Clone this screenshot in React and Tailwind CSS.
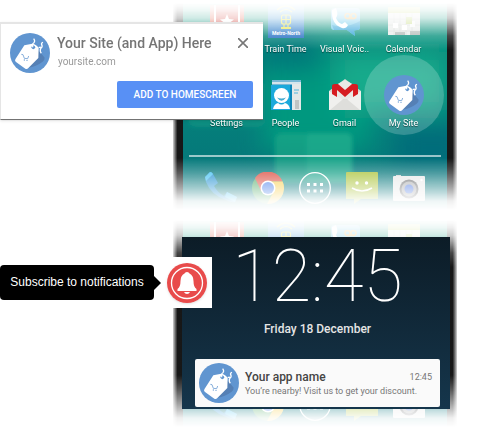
import React from "react";

function TagIcon({ className = "size-10" }) {
  return (
    <svg viewBox="0 0 120 120" className={`${className} shrink-0`} aria-hidden="true">
      <circle cx="60" cy="60" r="60" fill="#6095d0" />
      <path d="M86 52 L104 74 Q104 82 98 86 Q78 101 55 104 Z" fill="#5580b5" />
      <path d="M43 37 L67 32 Q80 34 86 45 L85 75 L55 105 Q51 110 46 107 L17 86 Q13 82 17 77Z" fill="#fff" />
      <circle cx="70" cy="43" r="5.500" fill="#6095d0" />
      <path d="M69 43 Q64 34 71 30 Q77 25 71 17" fill="none" stroke="#fff" strokeWidth="3.500" />
      <path d="M86 44 Q96 39 91 50 Q90 57 94 61 M91 47 Q99 43 95 35 Q93 30 99 28" fill="none" stroke="#fff" strokeWidth="4" />
      <path d="M34 64 L39 65 L43 76 L53 77 L56 69" fill="none" stroke="#6f9fd4" strokeWidth="2.500" />
      <circle cx="43" cy="81" r="2" fill="#6f9fd4" />
      <circle cx="51" cy="82" r="2" fill="#6f9fd4" />
    </svg>
  );
}

function StarIcon() {
  return (
    <svg viewBox="0 0 36 32" className="h-8 w-9" aria-hidden="true">
      <rect x="1" width="34" height="32" fill="#fff" />
      <path d="M1 0H5V32H1Z M31 0H35V32H31Z" fill="#e0563f" />
      <rect x="7" width="22" height="32" fill="#d23b32" />
      <path d="m18 9 2 5 5 .5-4 3 1.500 5-4.500-3-4.500 3 1.500-5-4-3 5-.5z" fill="#fff" />
    </svg>
  );
}

function TrainIcon({ caption }) {
  return (
    <svg viewBox="0 0 36 34" className="h-[34px] w-9" aria-hidden="true">
      <defs>
        <linearGradient id="train" x2="0" y2="1">
          <stop stopColor="#4fb0e0" />
          <stop offset="1" stopColor="#2a70c4" />
        </linearGradient>
      </defs>
      <rect width="36" height="34" fill="url(#train)" />
      <g fill="none" stroke="#e8e337" strokeWidth="1.200">
        <path d="M9 6Q18-2 27 6M12 8Q18 3 24 8" />
        <rect x="13.500" y="11" width="9" height="9" rx="2" />
        <path d="M14 15.500H22M18 11V20M16 20V24M20 20V24" />
      </g>
      <path d="M13 23H23V25H13Z" fill="#e8e337" />
      {caption && (
        <text x="18" y="31" textAnchor="middle" fontSize="5" fontWeight="700" fill="#fff" fontFamily="Roboto, sans-serif">{caption}</text>
      )}
    </svg>
  );
}

function VoicemailIcon() {
  return (
    <svg viewBox="0 0 32 32" className="size-8" aria-hidden="true">
      <path d="M5 3H28Q31 3 31 6V22Q31 25 28 25H25L26 31L18 25H5Q2 25 2 22V6Q2 3 5 3Z" fill="#5cc3e8" />
      <path d="M3 20Q17 24 31 16V22Q31 25 28 25L25 26 26 31 18 25H5Z" fill="#2da3d8" />
      <path d="M3 5 7 3Q9 8 8 11L7 13Q9 18 13 19L16 17 19 20Q17 24 13 23Q2 19 3 5Z" fill="#fff" />
      <g fill="none" stroke="#f2b24a" strokeWidth="1.500">
        <circle cx="18.500" cy="11" r="2.500" />
        <circle cx="24.500" cy="11" r="2.500" />
        <path d="M18 13.500H25" />
      </g>
    </svg>
  );
}

function CalendarIcon() {
  return (
    <svg viewBox="0 0 32 32" className="size-8" aria-hidden="true">
      <rect y="2" width="32" height="28" fill="#e9ecea" />
      <rect y="2" width="32" height="6" fill="#c0d35a" />
      <path d="M0 14H32M0 20H32M0 26H32M6 8V30M12 8V30M18 8V30M24 8V30" stroke="#d3d9d6" strokeWidth=".8" />
      <rect x="5" y="18" width="5" height="5" fill="#fff" />
      <rect x="14" y="20" width="5" height="5" fill="#fff" />
      <rect x="22" y="16" width="5" height="6" fill="#f8faf8" />
      <rect x="18" y="12" width="6" height="7" fill="#c8dc86" />
      <path d="M7 27H17V30H7Z M22 26H32V30H22Z" fill="#b3bab7" />
    </svg>
  );
}

function GearIcon() {
  return (
    <svg viewBox="0 0 32 32" className="size-8" aria-hidden="true">
      <circle cx="16" cy="16" r="10" fill="none" stroke="#c9d0d2" strokeWidth="5" />
    </svg>
  );
}

function PeopleIcon() {
  return (
    <svg viewBox="0 0 32 32" className="size-8" aria-hidden="true">
      <path d="M2 1H31V6H2Z" fill="#77b8d5" />
      <path d="M2 3H31V5H2Z" fill="#d4e5ec" />
      <path d="M22 5H31V31H22Z" fill="#e4e8e8" />
      <path d="M24 11H29M24 14H28" stroke="#55b6dc" />
      <path d="M25 21H29V30H25Z" fill="#c1c4c4" />
      <rect x="1" y="6" width="21" height="25" fill="#1ba9db" />
      <path d="M20 6H22V31H20Z" fill="#0d88b9" />
      <circle cx="11.500" cy="16.500" r="7.500" fill="#fff" />
      <path d="M7 18.500Q11.500 25 16 18.500Q11.500 20.500 7 18.500Z" fill="#48acd0" />
      <path d="M3 30Q4 25 8 24Q11.500 27 15 24Q19 25 20 30Z" fill="#fff" />
    </svg>
  );
}

function GmailIcon() {
  return (
    <svg viewBox="0 0 32 32" className="size-8" aria-hidden="true">
      <path d="M0 12 16 0 32 12V31H0Z" fill="#d8d8d5" />
      <path d="M5 7 16 1 27 7V20H5Z" fill="#e9e9e6" />
      <path d="M0 12 16 22 32 12V31H0Z" fill="#f0f0ee" />
      <path d="M1 31 13 21Q16 19 19 21L31 31Z" fill="#dededb" />
      <path d="M3 7Q3 5 6 5H9L16 11 23 5H26Q29 5 29 7V15L24 18V11L16 18 8 11V18L3 15Z" fill="#d61d22" />
    </svg>
  );
}

function PhoneIcon() {
  return (
    <svg viewBox="0 0 32 32" className="size-8" aria-hidden="true">
      <path d="M0 5 5 0Q7 0 8 2L13 11 9 14Q13 21 19 24L22 20 32 25 30 30Q27 31 21 28Q6 23 1 10Z" fill="#1f8fd0" />
      <path d="M0 5 5 0Q7 0 8 2L5 5 1 9Z M22 20 32 25 30 30 20 25Z" fill="#3fc0f2" />
    </svg>
  );
}

function ChromeIcon() {
  return (
    <svg viewBox="0 0 32 32" className="size-8" aria-hidden="true">
      <circle cx="16" cy="16" r="16" fill="#4ba862" />
      <path d="M3 6A16 16 0 0 1 30.600 9.500H16L9 19Z" fill="#dc4a3d" />
      <path d="M16 9.500H30.600A16 16 0 0 1 15 32L22 19Z" fill="#f8cc42" />
      <circle cx="16" cy="16" r="7.500" fill="#fff" />
      <circle cx="16" cy="16" r="6" fill="#4179e8" />
    </svg>
  );
}

function DrawerIcon() {
  return (
    <svg viewBox="0 0 32 32" className="size-8" aria-hidden="true">
      <circle cx="16" cy="16" r="15.300" fill="#ffffff18" stroke="#fff" strokeWidth="1.300" />
      <path d="M8 11h3v3H8zM14.500 11h3v3h-3zM21 11h3v3h-3zM8 17.500h3v3H8zM14.500 17.500h3v3h-3zM21 17.500h3v3h-3z" fill="#fff" />
    </svg>
  );
}

function MessageIcon() {
  return (
    <svg viewBox="0 0 32 32" className="size-8" aria-hidden="true">
      <path d="M1 0H31Q32 0 32 1V27H15L8 32V27H0V1Q0 0 1 0Z" fill="#a9c237" />
      <circle cx="11" cy="11" r="1.700" fill="#fff" />
      <circle cx="20.500" cy="11" r="1.700" fill="#fff" />
      <path d="M6 16Q16 22 26 16" fill="none" stroke="#fff" strokeWidth="1.600" />
    </svg>
  );
}

function CameraIcon() {
  return (
    <svg viewBox="0 0 32 32" className="size-8" aria-hidden="true">
      <path d="M3 3H8V6H3Z" fill="#d0d3d3" />
      <rect y="4" width="32" height="25" rx="1" fill="#e7e8e8" />
      <circle cx="16" cy="17" r="9.500" fill="#6b6d6f" />
      <circle cx="16" cy="17" r="7.500" fill="#a9abad" />
      <circle cx="16" cy="17" r="4.500" fill="#4a77e0" />
      <circle cx="28.500" cy="8" r="1.200" fill="#fff" />
    </svg>
  );
}

function Wallpaper({ id }) {
  return (
    <svg className="absolute inset-0 size-full" viewBox="0 0 265 217" preserveAspectRatio="none" aria-hidden="true">
      <defs>
        <linearGradient id={`${id}-base`} x2="0" y2="1">
          <stop stopColor="#1aa184" />
          <stop offset=".28" stopColor="#05887c" />
          <stop offset=".7" stopColor="#057a7a" />
          <stop offset="1" stopColor="#0b7681" />
        </linearGradient>
        <filter id={`${id}-soft`}><feGaussianBlur stdDeviation="12" /></filter>
        <filter id={`${id}-edge`}><feGaussianBlur stdDeviation="2" /></filter>
      </defs>
      <rect width="265" height="217" fill={`url(#${id}-base)`} />
      <g filter={`url(#${id}-soft)`}>
        <rect x="80" y="60" width="110" height="90" fill="#06987f" />
        <rect x="155" y="52" width="110" height="58" fill="#16aa8b" />
        <rect x="215" y="128" width="70" height="40" fill="#046c7a" />
        <rect x="75" y="35" width="60" height="35" fill="#02777a" />
      </g>
      <g filter={`url(#${id}-edge)`}>
        <rect x="5" y="80" width="78" height="47" rx="7" fill="#099282" opacity=".8" />
        <rect x="92" y="133" width="78" height="50" rx="7" fill="#1aa789" opacity=".65" />
        <rect x="124" y="133" width="46" height="50" rx="5" fill="#2db593" opacity=".4" />
      </g>
    </svg>
  );
}

function HomeApp({ icon, label, highlighted }) {
  return (
    <li className="flex h-[50px] flex-col items-center gap-1.5">
      <span className="relative flex h-8 w-9 shrink-0 items-center justify-center">
        {highlighted && <span className="absolute -inset-x-[22px] -inset-y-6 rounded-full bg-white/20" />}
        <span className="relative flex shrink-0">{icon}</span>
      </span>
      {label && (
        <span className="relative whitespace-nowrap text-[9px] leading-3 text-white [text-shadow:0_1px_1px_#0008]">{label}</span>
      )}
    </li>
  );
}

function Phone({ id, locked }) {
  return (
    <div className="ml-[173px] mr-6 flex h-[217px] [mask-image:linear-gradient(transparent_3px,#0001_10px,#0003_18px,#0007_26px,#000c_36px,#000_50px,#000_158px,#000b_172px,#0006_187px,#0001_201px,transparent_210px)]">
      <div className="w-2.5 shrink-0 bg-linear-to-r from-neutral-300 via-neutral-900 via-45% to-neutral-900" />
      <div className="relative min-w-0 flex-1 overflow-hidden px-1.5 pt-[5px]">
        <Wallpaper id={id} />
        <ul className="relative grid grid-cols-4 gap-y-6 px-2">
          <HomeApp icon={<StarIcon />} />
          <HomeApp icon={<TrainIcon caption={!locked && "Metro-North"} />} label={!locked && "Train Time"} />
          <HomeApp icon={<VoicemailIcon />} label={!locked && "Visual Voic.."} />
          <HomeApp icon={<CalendarIcon />} label={!locked && "Calendar"} />
          <HomeApp icon={<GearIcon />} label={!locked && "Settings"} />
          <HomeApp icon={<PeopleIcon />} label={!locked && "People"} />
          <HomeApp icon={<GmailIcon />} label={!locked && "Gmail"} />
          <HomeApp icon={<TagIcon />} label={!locked && "My Site"} highlighted={!locked} />
        </ul>
        <hr className="relative mt-[26px] border-t-2 border-white/60" />
        <div className="relative mt-[15px] grid grid-cols-5 justify-items-center px-2">
          <PhoneIcon />
          <ChromeIcon />
          <DrawerIcon />
          <MessageIcon />
          <CameraIcon />
        </div>
      </div>
      <div className="w-2.5 shrink-0 bg-linear-to-l from-neutral-300 via-neutral-900 via-45% to-neutral-900" />
    </div>
  );
}

function InstallBanner() {
  return (
    <section className="absolute left-0 top-[22px] w-[263px] border-b border-l border-t-2 border-b-neutral-500 border-l-neutral-200 border-t-neutral-200 bg-white pb-[11px] pl-[9px] pr-2.5 pt-[9px] shadow-sm">
      <div className="flex gap-[7px]">
        <TagIcon />
        <div className="flex-1 text-[#757575]">
          <h1 className="whitespace-nowrap text-sm leading-5 font-medium">Your Site (and App) Here</h1>
          <p className="px-px text-[10px] leading-[18px] text-[#999]">yoursite.com</p>
        </div>
        <button type="button" aria-label="Close" className="flex h-5 w-5 items-center justify-center">
          <svg viewBox="0 0 10 10" className="size-2.5" aria-hidden="true">
            <path d="M0 0 10 10M10 0 0 10" stroke="#777" strokeWidth="1.600" />
          </svg>
        </button>
      </div>
      <div className="mt-2 flex justify-end">
        <button type="button" className="h-[27px] w-[136px] whitespace-nowrap rounded-xs bg-[#5890f5] text-[10px] font-medium text-white">ADD TO HOMESCREEN</button>
      </div>
    </section>
  );
}

function LockScreen() {
  return (
    <section className="absolute left-[182px] right-[31px] top-5 flex flex-col items-center bg-linear-to-b from-[#0c1c27] to-[#15364c] pb-0.5 pl-[13px] pr-2.5 text-white">
      <time className="text-[72px] leading-[80px] font-thin">12:45</time>
      <p className="mt-1 text-xs leading-4 font-medium text-neutral-200">Friday 18 December</p>
      <article className="mt-[22px] flex w-full items-center gap-1.5 rounded-xs bg-[#fafafa] p-1 pr-2 text-[#777]">
        <TagIcon />
        <div className="min-w-0 flex-1">
          <div className="flex items-center justify-between">
            <h2 className="text-xs leading-4 font-medium text-[#444]">Your app name</h2>
            <time className="text-[9px] leading-4">12:45</time>
          </div>
          <p className="whitespace-nowrap text-[9px] leading-3">You’re nearby! Visit us to get your discount.</p>
        </div>
      </article>
    </section>
  );
}

function SubscribePrompt() {
  return (
    <div className="absolute left-0 top-10 flex items-center">
      <div role="tooltip" className="h-[35px] w-[154px] whitespace-nowrap rounded bg-black text-center font-['Liberation_Sans',Arial,sans-serif] text-xs leading-[35px] text-white">
        Subscribe to notifications
      </div>
      <svg viewBox="0 0 7 14" className="h-3.5 w-[7px]" aria-hidden="true"><path d="M0 0 7 7 0 14Z" /></svg>
      <div className="flex h-[51px] w-[51px] items-center justify-center bg-white">
        <button type="button" aria-label="Subscribe to notifications" className="rounded-full shadow">
          <svg viewBox="0 0 40 40" className="size-10" aria-hidden="true">
            <circle cx="20" cy="20" r="20" fill="#e84b4b" />
            <circle cx="20" cy="20" r="15.500" fill="none" stroke="#fff" strokeWidth="1.300" />
            <path d="M20 9Q22 9 22.500 10.500Q26.500 12.500 26.500 18Q26.500 24 29.500 26V28H10.500V26Q13.500 24 13.500 18Q13.500 12.500 17.500 10.500Q18 9 20 9Z" fill="#fff" />
            <path d="M17 29H23Q22 31 20 31Q18 31 17 29Z" fill="#fff" />
          </svg>
        </button>
      </div>
    </div>
  );
}

export default function App() {
  return (
    <main className="h-screen overflow-hidden bg-white font-[Roboto,sans-serif] antialiased">
      <div className="relative">
        <Phone id="home" />
        <InstallBanner />
      </div>
      <div className="relative">
        <Phone id="lock" locked />
        <LockScreen />
        <SubscribePrompt />
      </div>
    </main>
  );
}
